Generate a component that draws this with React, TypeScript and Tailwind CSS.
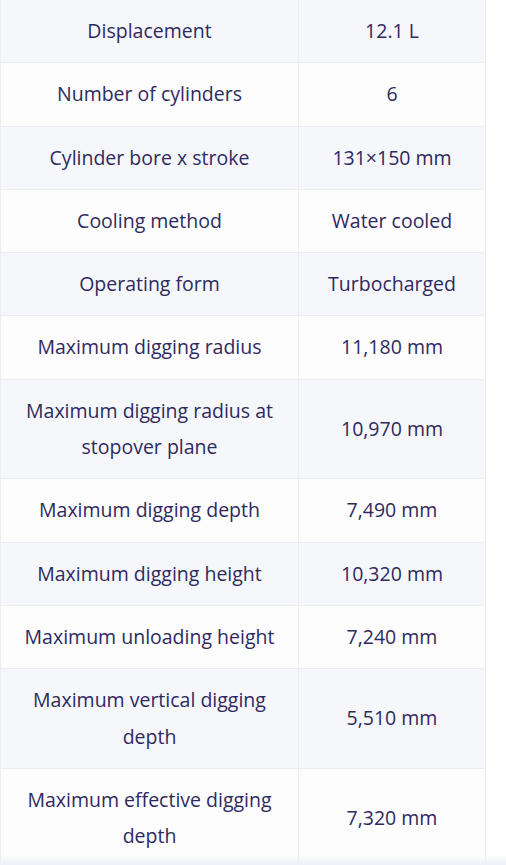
import React from 'react';

const specs = [
  ['Displacement', '12.1 L'],
  ['Number of cylinders', '6'],
  ['Cylinder bore x stroke', '131×150 mm'],
  ['Cooling method', 'Water cooled'],
  ['Operating form', 'Turbocharged'],
  ['Maximum digging radius', '11,180 mm'],
  ['Maximum digging radius at stopover plane', '10,970 mm'],
  ['Maximum digging depth', '7,490 mm'],
  ['Maximum digging height', '10,320 mm'],
  ['Maximum unloading height', '7,240 mm'],
  ['Maximum vertical digging depth', '5,510 mm'],
  ['Maximum effective digging depth', '7,320 mm'],
];

const App: React.FC = () => {
  return (
    <div className="relative bg-white h-[865px] overflow-hidden" style={{ fontFamily: '"Open Sans", "Noto Sans", sans-serif' }}>
      <table className="w-[486px] border-collapse text-[19.5px] leading-[36.3px] text-[#2e2a5e] -mt-px">
        <tbody>
          {specs.map(([label, value], i) => (
            <tr key={label} className={i % 2 === 0 ? 'bg-[#f6f7fb]' : 'bg-[#fdfdfe]'}>
              <td className="w-[298px] border border-[#ececf1] px-[20px] py-[13px] text-center">{label}</td>
              <td className="border border-[#ececf1] px-[12px] py-[13px] text-center">{value}</td>
            </tr>
          ))}
        </tbody>
      </table>
      {/* bottom fade */}
      <div className="pointer-events-none absolute bottom-0 left-0 right-0 h-[10px] bg-gradient-to-b from-transparent to-[#eef0f7]" />
    </div>
  );
};

export default App;
